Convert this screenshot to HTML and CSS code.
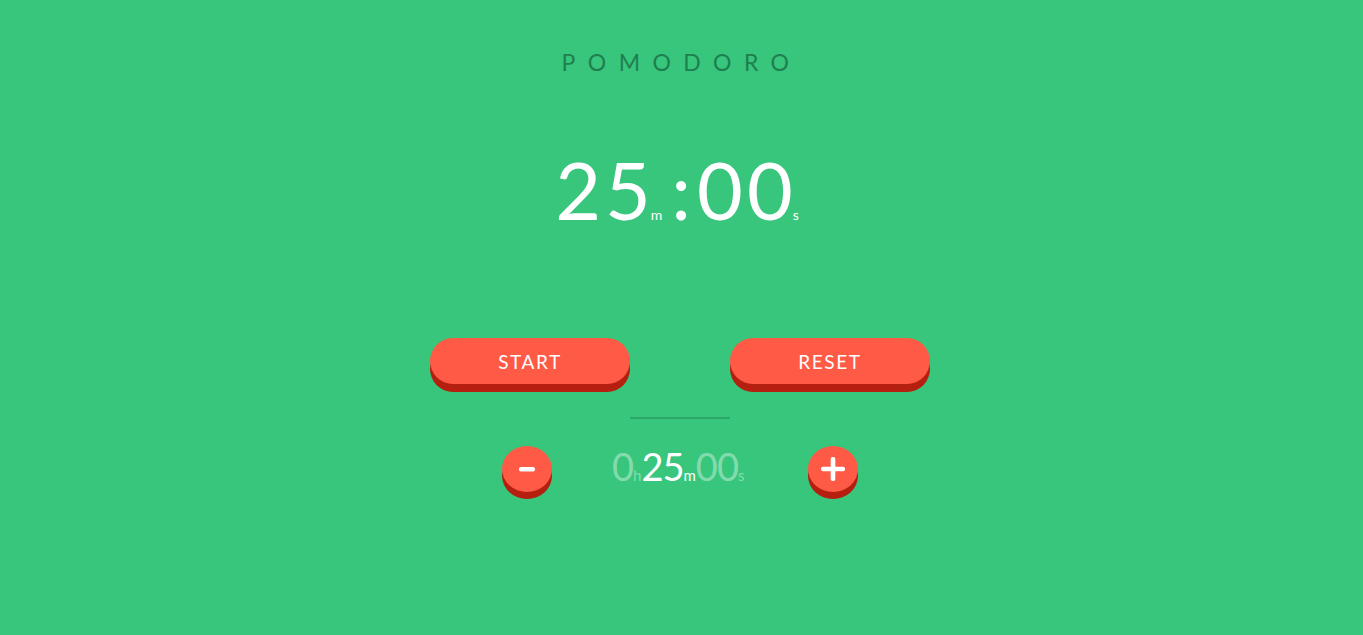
FILE: index.html
```html
<!DOCTYPE html>
<html>
<head>
<meta charset="utf-8">
<link rel="stylesheet" href="styles.css">
</head>
<body>
<main class="app">
  <h1 class="title">POMODORO</h1>
  <div class="clock">
    <span class="big"><span class="d">2</span>5</span><span class="unit">m</span><span class="colon">:</span><span class="big"><span class="d">0</span>0</span><span class="unit">s</span>
  </div>
  <div class="actions">
    <button class="btn">START</button>
    <button class="btn">RESET</button>
  </div>
  <div class="divider"></div>
  <div class="setter">
    <button class="round">
      <svg width="18" height="18" viewBox="0 0 18 18"><rect x="1" y="7" width="16" height="4.5" rx="2" fill="#fff"/></svg>
    </button>
    <div class="duration">
      <span class="dim">0</span><span class="dim sm">h</span><span class="on">25</span><span class="on sm">m</span><span class="dim">00</span><span class="dim sm">s</span>
    </div>
    <button class="round">
      <svg width="26" height="26" viewBox="0 0 26 26"><rect x="1" y="10.7" width="24" height="4.6" rx="2" fill="#fff"/><rect x="10.7" y="1" width="4.6" height="24" rx="2" fill="#fff"/></svg>
    </button>
  </div>
</main>
</body>
</html>
```
FILE: styles.css
```css
html, body {
  margin: 0;
  padding: 0;
  height: 100%;
}
body {
  background: #37c67c;
  font-family: Lato, sans-serif;
  color: #fff;
}
.app {
  display: flex;
  flex-direction: column;
  align-items: center;
}
.title {
  margin: 50px 0 0 0;
  font-family: Lato, sans-serif;
  font-weight: 400;
  font-size: 23px;
  letter-spacing: 12.4px;
  color: #1f7f4f;
  line-height: 24px;
}
.clock {
  margin-top: 71px;
  display: flex;
  align-items: baseline;
  font-family: Lato, sans-serif;
  line-height: 90px;
  height: 90px;
  margin-right: 9px;
}
.big {
  font-size: 79px;
}
.d {
  margin-right: 4px;
}
.colon {
  font-size: 79px;
  margin: 0 6px 0 9px;
}
.unit {
  font-size: 14px;
}
.actions {
  margin-top: 103px;
  margin-right: 3px;
  display: flex;
  gap: 100px;
}
.btn {
  width: 200px;
  height: 46px;
  border: 0;
  border-radius: 23px;
  background: #ff5a46;
  box-shadow: 0 8px 0 #b41f0f;
  color: #fff;
  font-family: Lato, sans-serif;
  font-size: 19px;
  letter-spacing: 1.6px;
  padding: 0;
  margin-bottom: 8px;
}
.divider {
  margin-top: 25px;
  margin-right: 3px;
  width: 100px;
  height: 2px;
  background: #2ba868;
}
.setter {
  margin-top: 27px;
  margin-right: 3px;
  display: flex;
  align-items: center;
  gap: 60px;
}
.round {
  width: 50px;
  height: 46px;
  border: 0;
  border-radius: 50%;
  background: #ff5a46;
  box-shadow: 0 7px 0 #b41f0f;
  padding: 0;
  display: flex;
  align-items: center;
  justify-content: center;
  margin-bottom: 7px;
}
.duration {
  display: flex;
  align-items: baseline;
  font-family: Lato, sans-serif;
  font-size: 38px;
  width: 136px;
  letter-spacing: -1px;
  margin: -7px 0 7px 0;
}
.sm {
  font-size: 15px;
  letter-spacing: 0;
}
.dim {
  color: rgba(255, 255, 255, 0.4);
}
.on {
  color: #fff;
}
```
